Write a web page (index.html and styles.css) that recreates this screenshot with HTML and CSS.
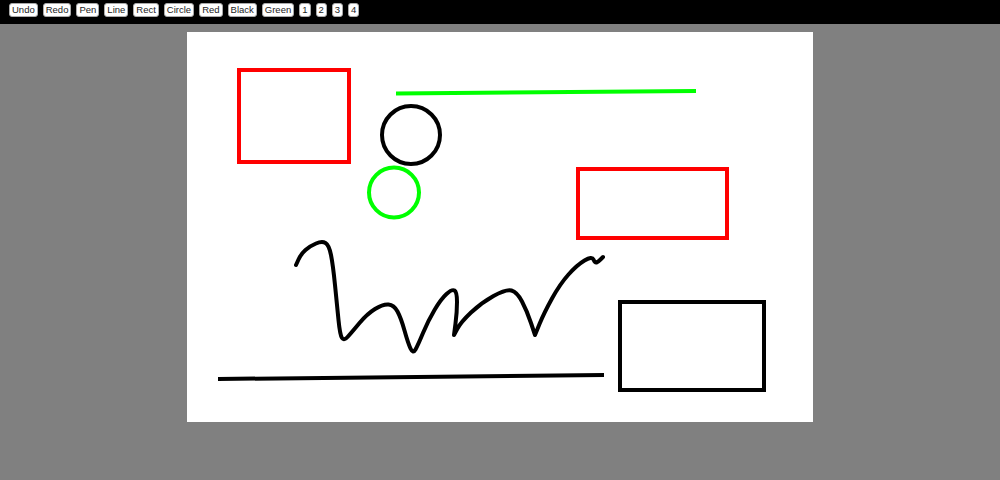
FILE: index.html
```html
<!DOCTYPE html>
<html>
<head>
<meta charset="utf-8">
<link rel="stylesheet" href="styles.css">
</head>
<body>
<div class="toolbar">
  <button class="btn">Undo</button>
  <button class="btn">Redo</button>
  <button class="btn">Pen</button>
  <button class="btn">Line</button>
  <button class="btn">Rect</button>
  <button class="btn">Circle</button>
  <button class="btn">Red</button>
  <button class="btn">Black</button>
  <button class="btn">Green</button>
  <button class="btn">1</button>
  <button class="btn">2</button>
  <button class="btn">3</button>
  <button class="btn">4</button>
</div>
<div class="stage">
  <svg class="canvas" width="626" height="390" viewBox="0 0 626 390">
    <g transform="translate(-187,-32)" fill="none" stroke-width="4" stroke-linecap="round" stroke-linejoin="round">
      <rect x="239" y="70" width="110" height="92" stroke="#ff0000" stroke-linejoin="miter"/>
      <line x1="396" y1="93.5" x2="696" y2="91" stroke="#00ff00" stroke-linecap="butt"/>
      <circle cx="411" cy="135" r="29" stroke="#000"/>
      <circle cx="394" cy="192.5" r="25" stroke="#00ff00"/>
      <rect x="578" y="169" width="149" height="69" stroke="#ff0000" stroke-linejoin="miter"/>
      <rect x="620" y="302" width="144" height="88" stroke="#000" stroke-linejoin="miter"/>
      <line x1="218" y1="379" x2="604" y2="375" stroke="#000" stroke-linecap="butt"/>
      <path stroke="#000" d="M296 265 L298.5 259.5 Q301 254 305.5 250 Q310 246 316 243.5 Q322 241 325.5 243 Q329 245 331 255 Q333 265 335 285 Q337 305 338.5 320 Q340 335 342 338 Q344 341 348 336.5 Q352 332 359.5 323 Q367 314 375 309 Q383 304 388.5 304.5 Q394 305 397.5 311.5 Q401 318 404.5 330.5 Q408 343 410.5 348.5 Q413 354 415.5 349.5 Q418 345 423 333 Q428 321 434.5 310 Q441 299 446.5 294 Q452 289 454.5 290.5 Q457 292 457 302 Q457 312 455.5 323.5 L454 335 L457.5 328.5 Q461 322 471 312.5 Q481 303 493.5 296 Q506 289 511.5 290.5 Q517 292 522 301.5 Q527 311 531 323 L535 335 L539.5 324 Q544 313 552 298.5 Q560 284 568.5 274.5 Q577 265 584.5 260.5 Q592 256 593.5 259.5 Q595 263 596.5 262.5 Q598 262 600.5 259.5 L603 257"/>
    </g>
  </svg>
</div>
</body>
</html>
```

FILE: styles.css
```css
html, body {
  margin: 0;
  padding: 0;
}
body {
  background: #808080;
  width: 1000px;
  height: 480px;
  overflow: hidden;
}
.toolbar {
  background: #000;
  height: 24px;
  box-sizing: border-box;
  padding: 3px 9px;
  display: flex;
  gap: 5px;
  align-items: flex-start;
}
.btn {
  font-family: "Liberation Sans", Arial, sans-serif;
  font-size: 9.5px;
  line-height: 12px;
  height: 14px;
  padding: 0 2px;
  margin: 0;
  border: 1px solid #aaa;
  border-radius: 3px;
  background: #fff;
  color: #222;
}
.stage {
  display: flex;
  justify-content: center;
  padding-top: 8px;
}
.canvas {
  display: block;
  background: #fff;
}
```
